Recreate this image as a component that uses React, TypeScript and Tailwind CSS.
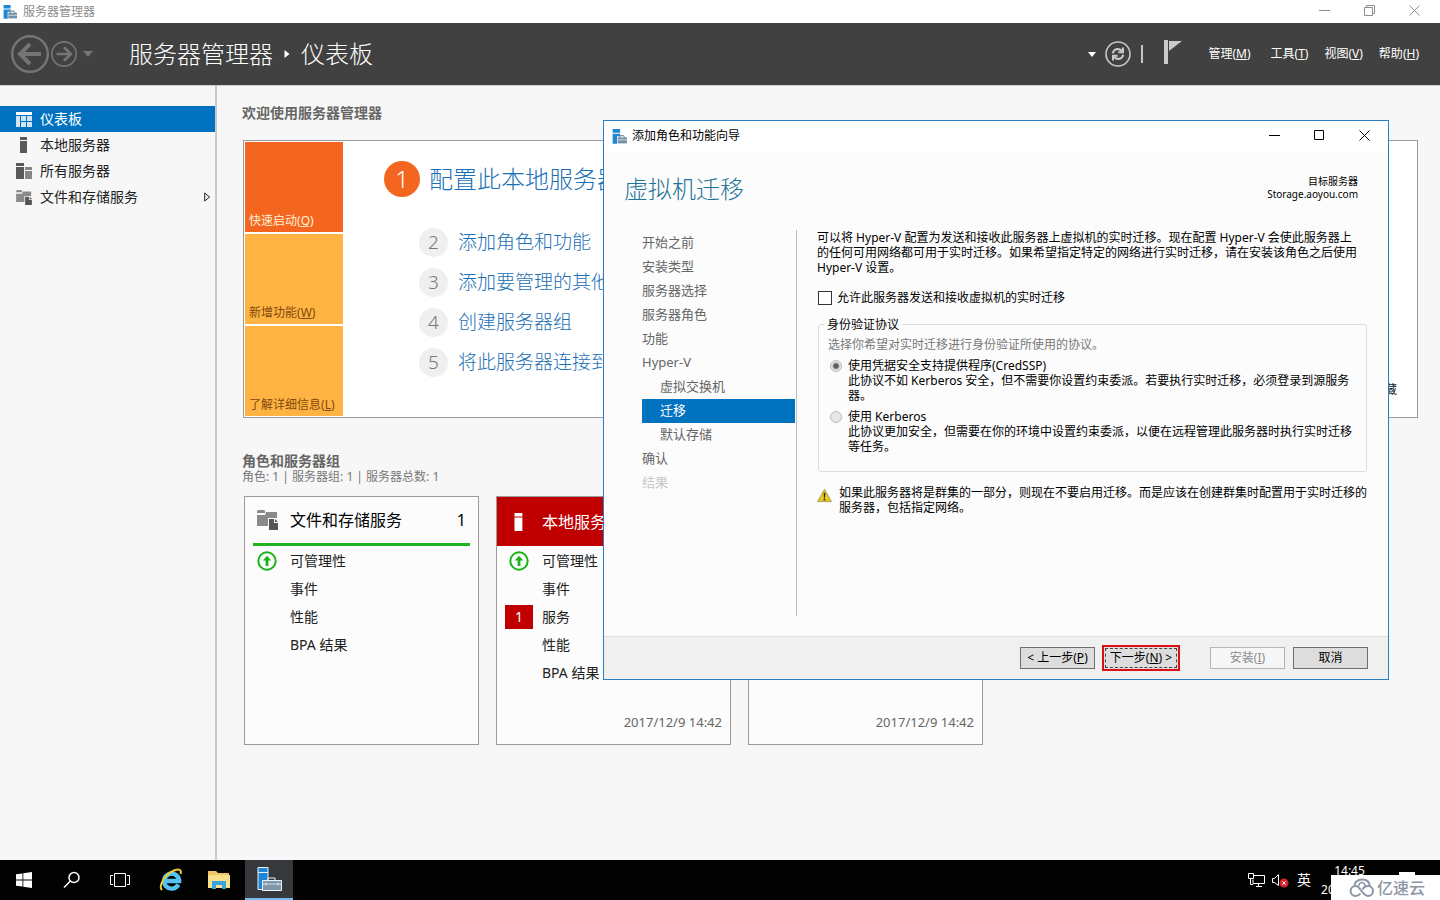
import React, { useState } from "react";

type IconProps = { className?: string };

// 서버 관리자 아이콘 (타워 + 도구 상자)
const ManagerIcon = ({ className }: IconProps) => (
  <svg viewBox="0 0 24 24" className={className} aria-hidden="true">
    <path d="M1 0h12v6H1z" fill="#1f86cf" />
    <path d="M1 7.500h12v4H8v12H1z" fill="#1f86cf" />
    <path d="M11 14l3-3.500h4l3 3.500" fill="none" stroke="#7d95a8" strokeWidth="1.800" />
    <path d="M9 13.500h15V23H9z" fill="#7390a8" />
    <path d="M9 17.500h15" stroke="#dfe9f0" strokeWidth="1.400" />
  </svg>
);

const DashboardIcon = ({ className }: IconProps) => (
  <svg viewBox="0 0 16 15" className={className} aria-hidden="true">
    <path d="M0 0h16v3H0z" fill="#fff" />
    <path d="M0 4h4v11H0zM5 4h5v5H5zM11 4h5v5h-5zM5 10h5v5H5zM11 10h5v5h-5z" fill="#cfe3f3" />
  </svg>
);

const ServerIcon = ({ className }: IconProps) => (
  <svg viewBox="0 0 16 16" className={className} aria-hidden="true">
    <path d="M4 0h7v3H4zM4 4h7v12H4z" fill="currentColor" />
  </svg>
);

const ServersIcon = ({ className }: IconProps) => (
  <svg viewBox="0 0 16 16" className={className} aria-hidden="true">
    <path d="M0 0h8v3H0zM0 4h8v12H0z" fill="#595959" />
    <path d="M9 4h7v3H9zM9 8h7v8H9z" fill="#868686" />
  </svg>
);

const StorageIcon = ({ className }: IconProps) => (
  <svg viewBox="0 0 21 20" className={className} aria-hidden="true">
    <path d="M0 1l1-1h6l1 1v2H0z" fill="#8a8a8a" />
    <path d="M0 5h8l1-3h11v6h-9v8H0z" fill="#8a8a8a" />
    <path d="M12 9h5v4h4v7h-9z" fill="#565656" />
    <path d="M18 9l3 3h-3z" fill="#565656" />
  </svg>
);

const UpIcon = ({ className }: IconProps) => (
  <svg viewBox="0 0 20 20" className={className} aria-hidden="true">
    <circle cx="10" cy="10" r="8.700" fill="none" stroke="#17b317" strokeWidth="2" />
    <path d="M10 4.800l4.200 4.700h-2.800V15H8.600V9.500H5.800z" fill="#17b317" />
  </svg>
);

const WarningIcon = ({ className }: IconProps) => (
  <svg viewBox="0 0 16 15" className={className} aria-hidden="true">
    <path d="M8 .8L15.400 14H.6z" fill="#e9c61c" stroke="#a79a5a" strokeLinejoin="round" />
    <path d="M7.100 4.600h1.800L8.500 10h-1z" fill="#222" />
    <circle cx="8" cy="11.800" r="1" fill="#222" />
  </svg>
);

const ArrowIcon = ({ className, flip }: IconProps & { flip?: boolean }) => (
  <svg viewBox="0 0 38 38" className={className} fill="none" stroke="#757575" aria-hidden="true">
    <circle cx="19" cy="19" r="17.800" strokeWidth="2.400" />
    <path
      d={flip ? "M8 19h20M19 9l10 10-10 10" : "M30 19H10M19 9L9 19l10 10"}
      strokeWidth="4"
    />
  </svg>
);

const RefreshIcon = ({ className }: IconProps) => (
  <svg viewBox="0 0 26 26" className={className} fill="none" stroke="#c9c9c9" aria-hidden="true">
    <circle cx="13" cy="13" r="12" strokeWidth="1.600" />
    <path
      d="M7.800 12.200c.6-3 3.200-4.400 5.600-4 1.500.2 2.600.9 3.400 2M18.200 13.800c-.6 3-3.200 4.400-5.600 4-1.500-.2-2.600-.9-3.400-2"
      strokeWidth="2.200"
    />
    <path d="M18 6.500v4.700h-4.700M8 19.500v-4.700h4.700" strokeWidth="2" />
  </svg>
);

const FlagIcon = ({ className }: IconProps) => (
  <svg viewBox="0 0 18 24" className={className} aria-hidden="true">
    <path d="M0 0h4v24H0zM5 1h13L5 11z" fill="#cacaca" />
  </svg>
);

const WindowControls = ({ restored, tone }: { restored?: boolean; tone: string }) => (
  <div className={`mb-0.5 flex items-center ${tone}`}>
    <button type="button" aria-label="最小化" className="flex h-5 w-[45px] items-center justify-center">
      <svg viewBox="0 0 11 11" className="size-[11px]" stroke="currentColor">
        <path d="M0 5.500h11" />
      </svg>
    </button>
    <button type="button" aria-label="最大化" className="flex h-5 w-[45px] items-center justify-center">
      <svg viewBox="0 0 11 11" className="size-[11px]" fill="none" stroke="currentColor">
        {restored ? (
          <path d="M.5 2.500h8v8h-8zM2.500 2.500v-2h8v8h-2" />
        ) : (
          <path d="M.5.5h9v9h-9z" />
        )}
      </svg>
    </button>
    <button type="button" aria-label="关闭" className="flex h-5 w-[45px] items-center justify-center">
      <svg viewBox="0 0 11 11" className="size-[11px]" stroke="currentColor">
        <path d="M.5.5l10 10M10.500.5l-10 10" />
      </svg>
    </button>
  </div>
);

const menus = [
  { label: "管理", hotkey: "M", gap: "mr-5" },
  { label: "工具", hotkey: "T", gap: "mr-4" },
  { label: "视图", hotkey: "V", gap: "mr-4" },
  { label: "帮助", hotkey: "H", gap: "" },
];

const tiles = [
  { label: "快速启动", hotkey: "Q", color: "bg-[#f4661f] text-[#fff3d8]" },
  { label: "新增功能", hotkey: "W", color: "bg-[#ffb343] text-[#7f4a0b]" },
  { label: "了解详细信息", hotkey: "L", color: "bg-[#ffb343] text-[#7f4a0b]" },
];

const steps = ["添加角色和功能", "添加要管理的其他", "创建服务器组", "将此服务器连接到"];

const wizardSteps = [
  { label: "开始之前" },
  { label: "安装类型" },
  { label: "服务器选择" },
  { label: "服务器角色" },
  { label: "功能" },
  { label: "Hyper-V" },
  { label: "虚拟交换机", sub: true },
  { label: "迁移", sub: true, active: true },
  { label: "默认存储", sub: true },
  { label: "确认" },
  { label: "结果", disabled: true },
];

const Header = () => (
  <header className="flex h-[62px] shrink-0 items-center bg-[#414141] pl-[11px] pr-[21px] text-white">
    <button type="button" aria-label="后退">
      <ArrowIcon className="size-[38px]" />
    </button>
    <button type="button" aria-label="前进" className="ml-0.5">
      <ArrowIcon flip className="size-[26px]" />
    </button>
    <svg viewBox="0 0 10 6" className="ml-1.5 h-1.5 w-2.5" aria-hidden="true">
      <path d="M0 0h10L5 6z" fill="#757575" />
    </svg>
    <h1 className="ml-9 flex items-center text-2xl font-light">
      服务器管理器
      <svg viewBox="0 0 5 8" className="mx-[11px] h-2 w-[6px]" aria-hidden="true">
        <path d="M0 0l5 4-5 4z" fill="#fff" />
      </svg>
      仪表板
    </h1>
    <div className="ml-auto flex items-center">
      <svg viewBox="0 0 8 5" className="mr-[9px] h-[5px] w-2" aria-hidden="true">
        <path d="M0 0h8L4 5z" fill="#fff" />
      </svg>
      <button type="button" aria-label="刷新">
        <RefreshIcon className="size-[26px]" />
      </button>
      <div className="ml-[10px] h-[18px] w-0.5 bg-[#c4c4c4]" />
      <button type="button" aria-label="通知" className="ml-[21px] mr-[26px]">
        <FlagIcon className="mb-1 h-6 w-[18px]" />
      </button>
      <nav className="flex text-xs">
        {menus.map((m) => (
          <button type="button" key={m.label} className={m.gap}>
            {m.label}(<u>{m.hotkey}</u>)
          </button>
        ))}
      </nav>
    </div>
  </header>
);

const Sidebar = () => (
  <nav className="w-[217px] shrink-0 border-r-2 border-[#c9c9c9] pt-5 text-sm text-[#222]">
    <a href="#dashboard" className="flex h-[26px] items-center gap-2 bg-[#0072c0] pl-4 text-white">
      <DashboardIcon className="h-[15px] w-4" />
      仪表板
    </a>
    <a href="#local" className="flex h-[26px] items-center gap-2 pl-4">
      <ServerIcon className="size-4 text-[#595959]" />
      本地服务器
    </a>
    <a href="#all" className="flex h-[26px] items-center gap-2 pl-4">
      <ServersIcon className="size-4" />
      所有服务器
    </a>
    <a href="#storage" className="flex h-[26px] items-center gap-2 pl-4 pr-1">
      <StorageIcon className="h-[15px] w-4" />
      文件和存储服务
      <svg viewBox="0 0 7 10" className="ml-auto h-[10px] w-[7px]" fill="none" stroke="#222" aria-hidden="true">
        <path d="M.7 1l5 4-5 4z" />
      </svg>
    </a>
  </nav>
);

type CardProps = {
  title?: string;
  icon?: React.ReactNode;
  count?: number;
  alert?: boolean;
  rows?: { label: string; ok?: boolean; errors?: number }[];
  date?: string;
};

const RoleCard = ({ title, icon, count, alert, rows = [], date }: CardProps) => (
  <section className="flex h-[249px] w-[235px] flex-col border border-[#9b9b9b] bg-[#fcfcfc]">
    <div
      className={
        alert
          ? "flex h-[49px] items-center bg-[#c00000] px-2 text-white"
          : "mx-2 flex h-[49px] items-center border-[#1fb41f] text-black " + (title ? "border-b-[3px]" : "")
      }
    >
      <span className="flex w-[37px] justify-start pl-1">{icon}</span>
      <h3 className="text-base">{title}</h3>
      <span className="ml-auto pr-1 text-base">{count}</span>
    </div>
    <ul className="px-2 pt-px text-sm text-[#222]">
      {rows.map((row) => (
        <li key={row.label} className="flex h-7 items-center">
          <span className="flex w-[37px]">
            {row.ok && <UpIcon className="ml-1 size-5" />}
            {row.errors && (
              <span className="flex h-6 w-7 items-center justify-center bg-[#c00000] text-white">
                {row.errors}
              </span>
            )}
          </span>
          {row.label}
        </li>
      ))}
    </ul>
    {date && <time className="mt-auto px-2 pb-3 text-right text-[13px] leading-5 text-[#666]">{date}</time>}
  </section>
);

const Dashboard = () => (
  <main className="min-w-0 flex-1 pl-[25px] pr-[22px] pt-[19px]">
    <h2 className="text-sm leading-4 font-bold text-[#666]">欢迎使用服务器管理器</h2>
    <section className="ml-px mt-[19px] flex border border-[#9b9b9b] bg-white p-px">
      <div className="flex w-[98px] shrink-0 flex-col gap-0.5">
        {tiles.map((t) => (
          <button
            type="button"
            key={t.label}
            className={`flex h-[90px] items-end whitespace-nowrap px-1 pb-[3px] text-xs leading-4 ${t.color}`}
          >
            {t.label}(<u>{t.hotkey}</u>)
          </button>
        ))}
      </div>
      <div className="flex-1 pl-[41px] pt-[19px] font-light text-[#1b6fb5]">
        <a href="#configure" className="flex h-9 items-center gap-[9px] text-2xl">
          <span className="flex size-9 items-center justify-center rounded-full bg-[#f4661f] text-white">
            1
          </span>
          配置此本地服务器
        </a>
        <ol className="mt-[25px] pl-[35px] text-[19px]">
          {steps.map((s, i) => (
            <li key={s} className="flex h-10 items-center gap-[10px]">
              <span className="flex size-[29px] items-center justify-center rounded-full bg-[#efefef] text-[#777]">
                {i + 2}
              </span>
              <a href="#step">{s}</a>
            </li>
          ))}
        </ol>
      </div>
      <button type="button" className="mb-[18px] mr-[19px] self-end text-xs leading-4 text-[#222]">
        隐藏
      </button>
    </section>

    <h2 className="mt-[35px] text-sm leading-4 font-bold text-[#666]">角色和服务器组</h2>
    <p className="text-xs leading-4 text-[#777]">角色: 1 | 服务器组: 1 | 服务器总数: 1</p>
    <div className="mt-[11px] flex gap-[17px] pl-0.5">
      <RoleCard
        title="文件和存储服务"
        icon={<StorageIcon className="h-5 w-[21px]" />}
        count={1}
        rows={[{ label: "可管理性", ok: true }, { label: "事件" }, { label: "性能" }, { label: "BPA 结果" }]}
      />
      <RoleCard
        title="本地服务器"
        icon={<ServerIcon className="ml-px size-[18px]" />}
        alert
        rows={[
          { label: "可管理性", ok: true },
          { label: "事件" },
          { label: "服务", errors: 1 },
          { label: "性能" },
          { label: "BPA 结果" },
        ]}
        date="2017/12/9 14:42"
      />
      <RoleCard date="2017/12/9 14:42" />
    </div>
  </main>
);

const radioStyle =
  "mt-[2px] size-3 shrink-0 appearance-none rounded-full border border-[#bcbcbc] bg-[#e6e6e6] checked:bg-[radial-gradient(circle,#5f5f5f_2px,#e6e6e6_4px)]";

const Wizard = () => {
  const [allow, setAllow] = useState(false);

  return (
    <div
      role="dialog"
      aria-labelledby="wizard-title"
      className="absolute left-[603px] top-[120px] flex h-[560px] w-[786px] flex-col border border-[#2b7fc0] bg-[#fcfcfc] text-xs text-black"
    >
      <div className="flex h-[30px] shrink-0 items-center bg-white pl-2 pr-px">
        <ManagerIcon className="size-[15px]" />
        <span id="wizard-title" className="ml-[5px] mr-auto">
          添加角色和功能向导
        </span>
        <WindowControls tone="text-black" />
      </div>

      <div className="flex items-start justify-between pl-5 pr-[30px] pt-5">
        <h2 className="text-2xl leading-9 font-light text-[#1f7396]">虚拟机迁移</h2>
        <div className="pt-1 text-right text-[10px] leading-[13px]">
          <p>目标服务器</p>
          <p>Storage.aoyou.com</p>
        </div>
      </div>

      <div className="mb-5 mt-[23px] flex min-h-0 flex-1">
        <ol className="ml-[38px] w-[155px] shrink-0 border-r border-[#bdbdbd] pr-px pt-px text-[13px] text-[#666]">
          {wizardSteps.map((s) => (
            <li
              key={s.label}
              className={
                "flex h-6 items-center " +
                (s.sub ? "pl-[18px] " : "") +
                (s.active ? "bg-[#0072c0] text-white" : s.disabled ? "text-[#c6c6c6]" : "")
              }
            >
              {s.label}
            </li>
          ))}
        </ol>

        <form className="min-w-0 flex-1 whitespace-nowrap pl-5 pr-[21px] leading-[15px]">
          <p>
            可以将 Hyper-V 配置为发送和接收此服务器上虚拟机的实时迁移。现在配置 Hyper-V 会使此服务器上
            <br />
            的任何可用网络都可用于实时迁移。如果希望指定特定的网络进行实时迁移，请在安装该角色之后使用
            <br />
            Hyper-V 设置。
          </p>
          <label className="mt-[15px] flex items-center gap-[5px] pl-px">
            <input
              type="checkbox"
              checked={allow}
              onChange={(e) => setAllow(e.target.checked)}
              className="size-[14px] appearance-none border border-[#333] bg-white checked:bg-[#0072c0]"
            />
            允许此服务器发送和接收虚拟机的实时迁移
          </label>

          <fieldset className="ml-px mt-3 h-[155px] rounded-[3px] border border-[#d9dde0] pl-[9px]">
            <legend className="-ml-1 px-[3px]">身份验证协议</legend>
            <p className="mt-[5px] text-[#777]">选择你希望对实时迁移进行身份验证所使用的协议。</p>
            <label className="mt-[6px] flex gap-[6px] pl-[2px]">
              <input type="radio" name="auth" defaultChecked disabled className={radioStyle} />
              <span>
                使用凭据安全支持提供程序(CredSSP)
                <br />
                此协议不如 Kerberos 安全，但不需要你设置约束委派。若要执行实时迁移，必须登录到源服务
                <br />
                器。
              </span>
            </label>
            <label className="mt-[6px] flex gap-[6px] pl-[2px]">
              <input type="radio" name="auth" disabled className={radioStyle} />
              <span>
                使用 Kerberos
                <br />
                此协议更加安全，但需要在你的环境中设置约束委派，以便在远程管理此服务器时执行实时迁移
                <br />
                等任务。
              </span>
            </label>
          </fieldset>

          <div className="mt-[13px] flex gap-[7px]">
            <WarningIcon className="mt-[3px] h-[15px] w-4" />
            <p>
              如果此服务器将是群集的一部分，则现在不要启用迁移。而是应该在创建群集时配置用于实时迁移的
              <br />
              服务器，包括指定网络。
            </p>
          </div>
        </form>
      </div>

      <footer className="flex h-[43px] shrink-0 items-center justify-end border-t border-[#dfdfdf] bg-[#f0f0f0] pr-5">
        <button type="button" className="h-[22px] w-[75px] border border-[#707070] bg-[#dddddd]">
          &lt; 上一步(<u>P</u>)
        </button>
        <button type="button" className="ml-[7px] h-[26px] w-[78px] border-2 border-[#dc0f14] bg-[#dddddd] p-px">
          <span className="flex h-full items-center justify-center whitespace-pre border border-dashed border-[#444]">
            下一步(<u>N</u>) &gt;
          </span>
        </button>
        <button
          type="button"
          disabled
          className="ml-[30px] h-[22px] w-[75px] border border-[#b5b5b5] bg-[#f6f6f6] text-[#8c8c8c]"
        >
          安装(<u>I</u>)
        </button>
        <button type="button" className="ml-2 h-[22px] w-[75px] border border-[#707070] bg-[#dddddd]">
          取消
        </button>
      </footer>
    </div>
  );
};

const Taskbar = () => (
  <footer className="relative flex h-10 shrink-0 items-stretch bg-[#020203] text-white">
    <button type="button" aria-label="开始" className="flex w-12 items-center justify-center">
      <svg viewBox="0 0 16 16" className="size-4" fill="#fff">
        <path d="M0 2.300l6.500-.9v6.100H0zM7.300 1.300L16 0v7.500H7.300zM0 8.400h6.500v6.200L0 13.700zM7.300 8.400H16V16l-8.700-1.200z" />
      </svg>
    </button>
    <button type="button" aria-label="搜索" className="flex w-12 items-center justify-center">
      <svg viewBox="0 0 18 18" className="size-[18px]" fill="none" stroke="#fff" strokeWidth="1.500">
        <circle cx="11" cy="6.500" r="5" />
        <path d="M7.400 10L1 16.500" />
      </svg>
    </button>
    <button type="button" aria-label="任务视图" className="flex w-12 items-center justify-center">
      <svg viewBox="0 0 20 14" className="h-[14px] w-5" fill="none" stroke="#fff">
        <path d="M4.500.5h11v13h-11zM3 2.500H.5v9H3M17 2.500h2.500v9H17" />
      </svg>
    </button>
    <button type="button" aria-label="浏览器" className="ml-[3px] flex w-12 items-center justify-center">
      <svg viewBox="0 0 24 24" className="size-6" fill="none">
        <path d="M19.300 16.500A7.500 7.500 0 1 1 20.100 13H7" stroke="#56c3f2" strokeWidth="4.400" />
        <path d="M3 22C-1 18 6 6 15 2.500 20 .5 23 1.500 21.500 6" stroke="#f3cb2e" strokeWidth="2" />
      </svg>
    </button>
    <button type="button" aria-label="文件资源管理器" className="flex w-12 items-center justify-center">
      <svg viewBox="0 0 22 20" className="h-5 w-[22px]">
        <path d="M0 1h8l2 2h11v15H0z" fill="#eec564" />
        <path d="M0 5h22v13H0z" fill="#fbe08c" />
        <path d="M4 11h14v8h-4v-4H8v4H4z" fill="#38a3dc" />
      </svg>
    </button>
    <button
      type="button"
      aria-label="服务器管理器"
      className="ml-[2px] flex w-12 items-center justify-center border-b-2 border-[#76b9ed] bg-[#37383b]"
    >
      <svg viewBox="0 0 25 25" className="size-[25px]" stroke="#e8f3fb">
        <path d="M1 .5h10v22H1z" fill="#1e86d4" />
        <path d="M1 5.500h10" />
        <path d="M11 13v-2h7v2" fill="none" />
        <path d="M5.500 13.500h19v10h-19z" fill="#7e96a8" />
        <path d="M6 17h18M9 15.500v3M21 15.500v3" strokeWidth=".8" />
      </svg>
    </button>

    <div className="ml-auto flex items-center pr-[62px]">
      <svg viewBox="0 0 17 14" className="h-[14px] w-[17px]" fill="none" stroke="#fff" aria-hidden="true">
        <path d="M6 2.500h10.500v8H5v-4M8 13.500h6M10.500 10.500v3M.5.5h5v5h-5zM2.500 5.500v6H5" />
      </svg>
      <svg viewBox="0 0 17 15" className="ml-[7px] h-[15px] w-[17px]" fill="none" aria-hidden="true">
        <path d="M.5 5.500h2L6.500 1.500v11L2.500 9.500h-2z" stroke="#fff" />
        <circle cx="12" cy="10" r="4.500" fill="#d3232b" />
        <path d="M10.300 8.300l3.400 3.400M13.700 8.300l-3.400 3.400" stroke="#fff" />
      </svg>
      <span className="ml-2 text-sm">英</span>
      <div className="ml-[10px] text-center text-xs leading-[19px]">
        <p>14:45</p>
        <p>2017/12/9</p>
      </div>
    </div>

    {/* 오른쪽 아래 로고 배지 */}
    <div className="absolute right-[25px] top-3 h-[3px] w-4 bg-white" />
    <div className="absolute bottom-0 right-0 flex h-[25px] w-[109px] items-center bg-white pl-[18px] text-[#8d96a6]">
      <svg viewBox="0 0 26 20" className="h-5 w-[26px]" fill="none" stroke="#8d96a6" strokeWidth="2" aria-hidden="true">
        <path d="M5.500 8C5 4.500 8.500 1.500 13 1.500s7.500 2.500 7.700 6.500" />
        <path d="M11.500 15.500c-1.300 1.700-2.800 2.500-4.900 2.500a5 5 0 1 1 0-10c5 0 6.700 10 12.400 10a5 5 0 1 0 0-10c-3 0-4.500 1.500-5.500 3.500" />
        <path d="M10 8.500a3 3 0 1 1 5.500.5" strokeWidth="1.500" />
      </svg>
      <span className="ml-0.5 text-base leading-5 font-medium">亿速云</span>
    </div>
  </footer>
);

const App = () => {
  return (
    <div className="relative flex min-h-screen flex-col overflow-hidden bg-[#f7f7f7] font-['Noto_Sans','Noto_Sans_CJK_SC',sans-serif]">
      <div className="flex h-[23px] shrink-0 items-center bg-white pl-[3px] pr-[3px] text-xs text-[#8c8c8c]">
        <ManagerIcon className="size-[14px]" />
        <span className="ml-[6px] mr-auto">服务器管理器</span>
        <WindowControls restored tone="text-[#8c8c8c]" />
      </div>
      <Header />
      <div className="flex flex-1 border-t border-[#d0d0d0]">
        <Sidebar />
        <Dashboard />
      </div>
      <Taskbar />
      <Wizard />
    </div>
  );
};

export default App;
